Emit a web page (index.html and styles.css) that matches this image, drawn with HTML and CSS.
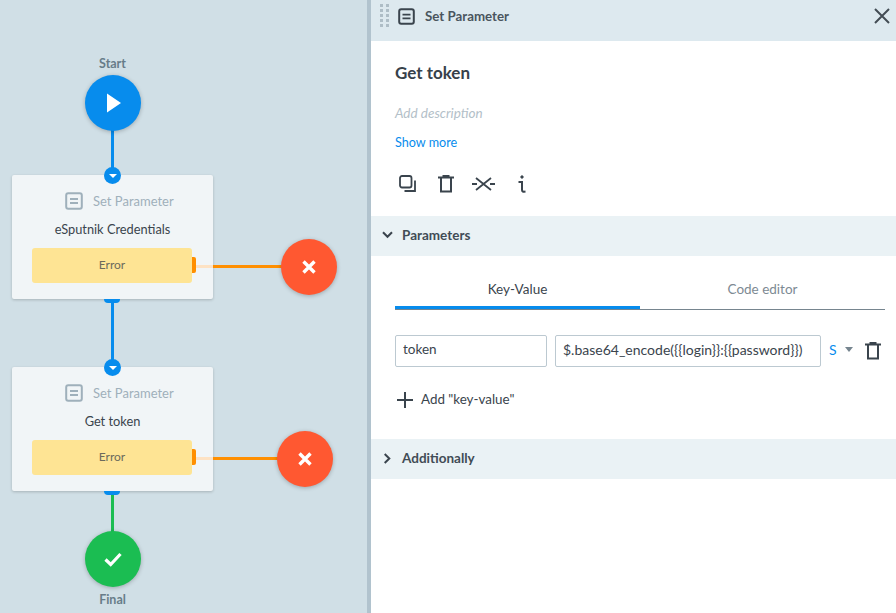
FILE: index.html
```html
<!DOCTYPE html>
<html lang="en">
<head>
    <meta charset="UTF-8">
    <title>Set Parameter</title>
    <link rel="stylesheet" href="styles.css">
</head>
<body>
    <div class="app">
        <!-- process diagram -->
        <div class="canvas">
            <div class="link link-blue link-start"></div>
            <div class="link link-blue link-middle"></div>
            <div class="link link-green link-final"></div>

            <div class="node-label label-start">Start</div>
            <div class="round round-start">
                <svg width="16" height="20" viewBox="0 0 16 20"><path d="M1 0.5 15 10 1 19.5Z" fill="#fff"/></svg>
            </div>

            <div class="card card-one">
                <div class="card-type">
                    <svg class="card-icon" width="18" height="18" viewBox="0 0 18 18"><rect x="1.2" y="1.2" width="15.6" height="15.6" rx="2" fill="none" stroke="#9fb0bb" stroke-width="2"/><path d="M5 7h8M5 11h8" stroke="#9fb0bb" stroke-width="2"/></svg>
                    <span>Set Parameter</span>
                </div>
                <div class="card-name">eSputnik Credentials</div>
                <div class="card-error">Error<i class="error-handle"></i></div>
                <i class="port-tab"></i>
            </div>
            <div class="port port-one"><i></i></div>

            <div class="card card-two">
                <div class="card-type">
                    <svg class="card-icon" width="18" height="18" viewBox="0 0 18 18"><rect x="1.2" y="1.2" width="15.6" height="15.6" rx="2" fill="none" stroke="#9fb0bb" stroke-width="2"/><path d="M5 7h8M5 11h8" stroke="#9fb0bb" stroke-width="2"/></svg>
                    <span>Set Parameter</span>
                </div>
                <div class="card-name">Get token</div>
                <div class="card-error">Error<i class="error-handle"></i></div>
                <i class="port-tab"></i>
            </div>
            <div class="port port-two"><i></i></div>

            <div class="link-error link-error-one"></div>
            <div class="link-error link-error-two"></div>

            <div class="round round-fail fail-one">
                <svg width="16" height="16" viewBox="0 0 16 16"><path d="M2.5 2.5l11 11M13.5 2.5l-11 11" stroke="#fff" stroke-width="3.4"/></svg>
            </div>
            <div class="round round-fail fail-two">
                <svg width="16" height="16" viewBox="0 0 16 16"><path d="M2.5 2.5l11 11M13.5 2.5l-11 11" stroke="#fff" stroke-width="3.4"/></svg>
            </div>

            <div class="round round-final">
                <svg width="18" height="15" viewBox="0 0 18 15"><path d="M1.5 7.5l5.2 5L16.5 2" fill="none" stroke="#fff" stroke-width="3.2"/></svg>
            </div>
            <div class="node-label label-final">Final</div>
        </div>

        <div class="divider"></div>

        <!-- settings panel -->
        <div class="panel">
            <div class="panel-head">
                <svg class="grip" width="9" height="24" viewBox="0 0 9 24" fill="#aebdc6"><rect x="0" y="0" width="3" height="3"/><rect x="6" y="0" width="3" height="3"/><rect x="0" y="5" width="3" height="3"/><rect x="6" y="5" width="3" height="3"/><rect x="0" y="10" width="3" height="3"/><rect x="6" y="10" width="3" height="3"/><rect x="0" y="15" width="3" height="3"/><rect x="6" y="15" width="3" height="3"/><rect x="0" y="20" width="3" height="3"/><rect x="6" y="20" width="3" height="3"/></svg>
                <svg class="head-icon" width="17" height="17" viewBox="0 0 17 17"><rect x="1.2" y="1.2" width="14.6" height="14.6" rx="2" fill="none" stroke="#3a444d" stroke-width="2"/><path d="M4.5 6.6h8M4.5 10.4h8" stroke="#3a444d" stroke-width="1.8"/></svg>
                <span class="head-title">Set Parameter</span>
                <svg class="head-close" width="16" height="16" viewBox="0 0 16 16"><path d="M1 1l14 14M15 1L1 15" stroke="#434d55" stroke-width="2"/></svg>
            </div>

            <div class="summary">
                <h1>Get token</h1>
                <div class="description">Add description</div>
                <a class="show-more">Show more</a>
                <div class="tools">
                    <svg width="18" height="18" viewBox="0 0 18 18" fill="none" stroke="#3a444d" stroke-width="1.8"><rect x="1" y="1" width="11.5" height="11.5" rx="2"/><path d="M16 5.5V16H5.5"/></svg>
                    <svg width="16" height="18" viewBox="0 0 16 18" fill="none" stroke="#3a444d" stroke-width="2"><path d="M0 2.5h16M3 2.5V16.5h10V2.5M5.5 2.5V1h5v1.5"/></svg>
                    <svg class="tool-cross" width="23" height="14" viewBox="0 0 23 14" fill="none" stroke="#3a444d" stroke-width="1.8"><path d="M4 1l15 12M19 1L4 13M0 7h5M18 7h5"/></svg>
                    <svg width="8" height="18" viewBox="0 0 8 18" fill="none" stroke="#3a444d" stroke-width="2"><circle cx="4" cy="2" r="1.2" fill="#3a444d" stroke-width="1"/><path d="M0.5 7H4V15c0 1.5 1 2 3.5 1.6"/></svg>
                </div>
            </div>

            <div class="section-head">
                <svg width="11" height="8" viewBox="0 0 11 8"><path d="M1 1.2l4.5 4.6L10 1.2" fill="none" stroke="#3a444d" stroke-width="2"/></svg>
                <span>Parameters</span>
            </div>

            <div class="section-body">
                <div class="tabs">
                    <div class="tab tab-active">Key-Value</div>
                    <div class="tab">Code editor</div>
                </div>
                <div class="row">
                    <input class="field field-key" value="token">
                    <input class="field field-value" value="$.base64_encode({{login}}:{{password}})">
                    <span class="type">S</span>
                    <i class="type-arrow"></i>
                    <svg class="row-delete" width="16" height="18" viewBox="0 0 16 18" fill="none" stroke="#3a444d" stroke-width="2"><path d="M0 2.5h16M3 2.5V16.5h10V2.5M5.5 2.5V1h5v1.5"/></svg>
                </div>
                <div class="add-row">
                    <svg width="16" height="16" viewBox="0 0 16 16"><path d="M8 0v16M0 8h16" stroke="#3a444d" stroke-width="2"/></svg>
                    <span>Add "key-value"</span>
                </div>
            </div>

            <div class="section-head">
                <svg width="8" height="11" viewBox="0 0 8 11"><path d="M1.2 1l4.6 4.5L1.2 10" fill="none" stroke="#3a444d" stroke-width="2"/></svg>
                <span>Additionally</span>
            </div>
        </div>
    </div>
</body>
</html>
```

FILE: styles.css
```css
html, body {
    margin: 0;
    height: 100%;
    overflow: hidden;
}

body {
    font-family: 'Lato', 'Noto Sans', sans-serif;
    font-size: 13px;
    color: #3a444d;
}

.app {
    display: flex;
    height: 613px;
}

/* canvas */
.canvas {
    position: relative;
    width: 367px;
    flex: none;
    background-color: #d0dfe6;
}

.divider {
    width: 4px;
    flex: none;
    background-color: #b1c3ce;
}

.node-label {
    position: absolute;
    left: 72px;
    width: 81px;
    text-align: center;
    font-weight: 700;
    font-size: 12.5px;
    line-height: 16px;
    color: #677c89;
}

.label-start { top: 56px; }
.label-final { top: 592px; }

.round {
    position: absolute;
    width: 56px;
    height: 56px;
    border-radius: 50%;
    display: flex;
    align-items: center;
    justify-content: center;
    box-shadow: 0 1px 4px rgba(0,0,0,0.25);
}

.round-start {
    left: 85px;
    top: 75px;
    background-color: #078ced;
}

.round-start svg { margin-left: 2px; }

.round-final {
    left: 85px;
    top: 531px;
    background-color: #1bbd52;
}

.round-fail { background-color: #ff5831; }
.fail-one { left: 281px; top: 239px; }
.fail-two { left: 277px; top: 431px; }

.link {
    position: absolute;
    left: 111px;
    width: 3px;
}

.link-blue { background-color: #078ced; }
.link-green { background-color: #1bbd52; }
.link-start { top: 130px; height: 42px; }
.link-middle { top: 299px; height: 64px; }
.link-final { top: 491px; height: 41px; }

.link-error {
    position: absolute;
    left: 196px;
    height: 3px;
    background: linear-gradient(to right, #fde2c4 17px, #ff8f00 17px);
}

.link-error-one { top: 265px; width: 86px; }
.link-error-two { top: 457px; width: 82px; }

.card {
    position: absolute;
    left: 12px;
    width: 201px;
    height: 124px;
    box-sizing: border-box;
    padding-top: 17px;
    background-color: #f1f5f7;
    border-radius: 2px;
    box-shadow: 0 1px 3px rgba(0,0,0,0.2);
}

.card-one { top: 175px; }
.card-two { top: 367px; }

.card-type {
    display: flex;
    align-items: center;
    height: 18px;
    padding-left: 53px;
    color: #9fb0bb;
    font-size: 13px;
}

.card-icon { margin-right: 10px; }

.card-name {
    margin-top: 10px;
    height: 18px;
    line-height: 18px;
    text-align: center;
    font-size: 12.8px;
}

.card-error {
    position: relative;
    margin: 10px 21px 0 20px;
    height: 35px;
    line-height: 33px;
    text-align: center;
    font-size: 12px;
    color: #6b6a5c;
    background-color: #fee494;
    border-radius: 3px;
}

.error-handle {
    position: absolute;
    left: 160px;
    top: 9px;
    width: 4px;
    height: 16px;
    background-color: #ff8f00;
    border-radius: 0 2px 2px 0;
}

.port-tab {
    position: absolute;
    left: 92px;
    bottom: -4px;
    width: 16px;
    height: 4px;
    background-color: #078ced;
    border-radius: 0 0 4px 4px;
}

.port {
    position: absolute;
    left: 104px;
    width: 17px;
    height: 17px;
    border-radius: 50%;
    background-color: #078ced;
    display: flex;
    align-items: center;
    justify-content: center;
}

.port i {
    width: 0;
    height: 0;
    border-left: 4px solid transparent;
    border-right: 4px solid transparent;
    border-top: 4px solid #fff;
}

.port-one { top: 167px; }
.port-two { top: 359px; }

/* panel */
.panel {
    flex: 1;
    background-color: #fff;
}

.panel-head {
    display: flex;
    align-items: center;
    height: 41px;
    box-sizing: border-box;
    padding: 0 6px 9px 9px;
    background-color: #dde9ef;
}

.head-icon { margin-left: 9px; }

.head-title {
    margin-left: 10px;
    font-weight: 700;
    font-size: 13.3px;
    color: #4a555e;
}

.head-close { margin-left: auto; }

.summary {
    height: 175px;
    box-sizing: border-box;
    padding: 21px 24px 0;
}

h1 {
    margin: 0;
    font-size: 17px;
    line-height: 22px;
    font-weight: 700;
    color: #37414a;
}

.description {
    margin-top: 19px;
    line-height: 20px;
    font-style: italic;
    font-size: 13.5px;
    color: #b3c0c8;
}

.show-more {
    display: block;
    margin-top: 10px;
    line-height: 20px;
    font-size: 12.6px;
    color: #078ced;
}

.tools {
    display: flex;
    align-items: center;
    gap: 21px;
    margin-top: 22px;
    padding-left: 4px;
}

.tool-cross {
    margin: 0 2px 0 -3px;
}

.section-head {
    display: flex;
    align-items: center;
    gap: 9px;
    height: 40px;
    box-sizing: border-box;
    padding: 0 0 2px 11px;
    background-color: #eaf2f5;
    font-weight: 700;
    font-size: 13.5px;
    color: #414c55;
}

.section-head svg {
    width: 11px;
}

.section-body {
    height: 183px;
    box-sizing: border-box;
    padding: 17px 11px 0 24px;
}

.tabs {
    display: flex;
    border-bottom: 1px solid #76858f;
    height: 36px;
}

.tab {
    flex: 1;
    text-align: center;
    line-height: 32px;
    font-size: 13.5px;
    color: #7d8a93;
}

.tab-active {
    color: #3a444d;
    height: 36px;
    border-bottom: 3px solid #078ced;
    box-sizing: border-box;
}

.row {
    display: flex;
    align-items: center;
    margin-top: 25px;
}

.field {
    height: 32px;
    box-sizing: border-box;
    padding: 0 7px 4px;
    border: 1px solid #bcc9d1;
    border-radius: 2px;
    font-family: inherit;
    font-size: 13.5px;
    color: #3a444d;
    outline: none;
}

.field-key { width: 152px; }
.field-value { width: 266px; margin-left: 8px; font-size: 14px; }

.type {
    margin-left: 8px;
    padding-bottom: 3px;
    color: #078ced;
    font-size: 14px;
}

.type-arrow {
    margin-left: 8px;
    margin-top: -3px;
    width: 0;
    height: 0;
    border-left: 4px solid transparent;
    border-right: 4px solid transparent;
    border-top: 5px solid #76858f;
}

.row-delete { margin-left: 12px; }

.add-row {
    display: flex;
    align-items: center;
    gap: 8px;
    margin-top: 24px;
    padding-left: 2px;
    font-size: 13.4px;
}

.add-row span {
    padding-bottom: 1px;
}
```
